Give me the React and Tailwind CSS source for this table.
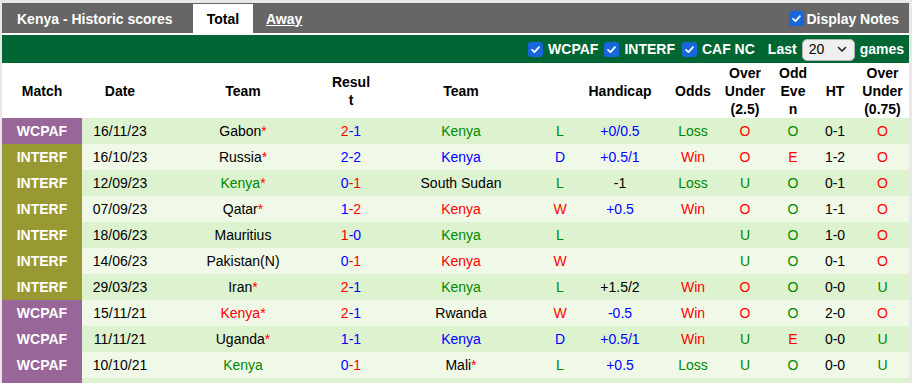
import React from 'react';

const C = {
    r: 'text-[#ff0000]',
    b: 'text-[#0000ff]',
    g: 'text-[#008800]',
    k: 'text-black',
};

// [league, date, [home, color, star], [hs, hc, as, ac], [away, color, star], [res, color], [hcap, color], [odds, color], [ou, color], [oe, color], ht, [ou2, color]]
const rows = [
    ['WCPAF', '16/11/23', ['Gabon', 'k', 1], ['2', 'r', '1', 'b'], ['Kenya', 'g', 0], ['L', 'g'], ['+0/0.5', 'b'], ['Loss', 'g'], ['O', 'r'], ['O', 'g'], '0-1', ['O', 'r']],
    ['INTERF', '16/10/23', ['Russia', 'k', 1], ['2', 'b', '2', 'b'], ['Kenya', 'b', 0], ['D', 'b'], ['+0.5/1', 'b'], ['Win', 'r'], ['O', 'r'], ['E', 'r'], '1-2', ['O', 'r']],
    ['INTERF', '12/09/23', ['Kenya', 'g', 1], ['0', 'b', '1', 'r'], ['South Sudan', 'k', 0], ['L', 'g'], ['-1', 'k'], ['Loss', 'g'], ['U', 'g'], ['O', 'g'], '0-1', ['O', 'r']],
    ['INTERF', '07/09/23', ['Qatar', 'k', 1], ['1', 'b', '2', 'r'], ['Kenya', 'r', 0], ['W', 'r'], ['+0.5', 'b'], ['Win', 'r'], ['O', 'r'], ['O', 'g'], '1-1', ['O', 'r']],
    ['INTERF', '18/06/23', ['Mauritius', 'k', 0], ['1', 'r', '0', 'b'], ['Kenya', 'g', 0], ['L', 'g'], ['', 'k'], ['', 'k'], ['U', 'g'], ['O', 'g'], '1-0', ['O', 'r']],
    ['INTERF', '14/06/23', ['Pakistan(N)', 'k', 0], ['0', 'b', '1', 'r'], ['Kenya', 'r', 0], ['W', 'r'], ['', 'k'], ['', 'k'], ['U', 'g'], ['O', 'g'], '0-1', ['O', 'r']],
    ['INTERF', '29/03/23', ['Iran', 'k', 1], ['2', 'r', '1', 'b'], ['Kenya', 'g', 0], ['L', 'g'], ['+1.5/2', 'k'], ['Win', 'r'], ['O', 'r'], ['O', 'g'], '0-0', ['U', 'g']],
    ['WCPAF', '15/11/21', ['Kenya', 'r', 1], ['2', 'r', '1', 'b'], ['Rwanda', 'k', 0], ['W', 'r'], ['-0.5', 'b'], ['Win', 'r'], ['O', 'r'], ['O', 'g'], '2-0', ['O', 'r']],
    ['WCPAF', '11/11/21', ['Uganda', 'k', 1], ['1', 'b', '1', 'b'], ['Kenya', 'b', 0], ['D', 'b'], ['+0.5/1', 'b'], ['Win', 'r'], ['U', 'g'], ['E', 'r'], '0-0', ['U', 'g']],
    ['WCPAF', '10/10/21', ['Kenya', 'g', 0], ['0', 'b', '1', 'r'], ['Mali', 'k', 1], ['L', 'g'], ['+0.5', 'b'], ['Loss', 'g'], ['U', 'g'], ['O', 'g'], '0-0', ['U', 'g']],
];

const Check = () => (
    <span className="inline-flex items-center justify-center w-[15px] h-[15px] rounded-[3px] bg-[#1667dc]">
        <svg width="11" height="11" viewBox="0 0 12 12" fill="none">
            <path d="M2.2 6.3 L4.9 8.9 L9.8 3.4" stroke="white" strokeWidth="1.9" strokeLinecap="round" strokeLinejoin="round" />
        </svg>
    </span>
);

const Team = ({ t }) => (
    <span className={C[t[1]]}>
        {t[0]}
        {t[2] ? <span className="text-[#ff0000]">*</span> : null}
    </span>
);

export default function App() {
    return (
        <div className="w-[912px] bg-[#e8e8e8] pl-[2px] pt-[3px] pr-[3px] font-['Liberation_Sans',Arial,sans-serif] text-[14px]">
            <div className="w-[907px] bg-white">
                {/* Title bar */}
                <div className="h-[30px] bg-[#666666] flex items-end text-white font-bold">
                    <div className="h-[30px] flex items-center pt-[2px] pl-[15px] w-[191px]">Kenya - Historic scores</div>
                    <div className="h-[29px] w-[60px] pt-[1px] bg-white text-black flex items-center justify-center">Total</div>
                    <div className="h-[30px] flex items-center pt-[2px] pl-[13px] underline">Away</div>
                    <div className="h-[30px] flex items-center pt-[2px] ml-auto pr-[10px]">
                        <span className="mr-[2px]"><Check /></span>
                        Display Notes
                    </div>
                </div>

                {/* Filter bar */}
                <div className="mt-[2px] h-[28px] pt-[1px] bg-[#006633] flex items-center justify-end pr-[5px] text-white font-bold">
                    <Check />
                    <span className="ml-[5px] mr-[6px]">WCPAF</span>
                    <Check />
                    <span className="ml-[5px] mr-[7px]">INTERF</span>
                    <Check />
                    <span className="ml-[5px] mr-[13px]">CAF NC</span>
                    <span className="mr-[5px]">Last</span>
                    <div className="w-[53px] h-[22px] rounded-[5px] border border-[#b5b5b5] bg-[#efefef] text-black font-normal flex items-center pl-[6px] pr-[7px]">
                        <span>20</span>
                        <svg className="ml-auto" width="10" height="7" viewBox="0 0 10 7" fill="none">
                            <path d="M1.5 1.5 L5 5 L8.5 1.5" stroke="#222" strokeWidth="1.6" strokeLinecap="round" strokeLinejoin="round" />
                        </svg>
                    </div>
                    <span className="ml-[5px]">games</span>
                </div>

                <table className="table-fixed border-collapse w-[907px] text-center">
                    <colgroup>
                        <col className="w-[80px]" />
                        <col className="w-[76px]" />
                        <col className="w-[170px]" />
                        <col className="w-[46px]" />
                        <col className="w-[174px]" />
                        <col className="w-[24px]" />
                        <col className="w-[96px]" />
                        <col className="w-[50px]" />
                        <col className="w-[54px]" />
                        <col className="w-[42px]" />
                        <col className="w-[42px]" />
                        <col className="w-[53px]" />
                    </colgroup>
                    <thead>
                        <tr className="h-[54px] bg-white font-bold text-black leading-[18px]">
                            <th className="p-0 pt-[1px]">Match</th>
                            <th className="p-0 pt-[1px]">Date</th>
                            <th className="p-0 pt-[1px]">Team</th>
                            <th className="p-0 pt-[1px] px-[3px] break-all">Result</th>
                            <th className="p-0 pt-[1px]">Team</th>
                            <th className="p-0"></th>
                            <th className="p-0 pt-[1px]">Handicap</th>
                            <th className="p-0 pt-[1px]">Odds</th>
                            <th className="p-0 pt-[1px]">Over Under (2.5)</th>
                            <th className="p-0 pt-[1px] px-[6px] break-all">Odd Even</th>
                            <th className="p-0 pt-[1px]">HT</th>
                            <th className="p-0 pt-[1px]">Over Under (0.75)</th>
                        </tr>
                    </thead>
                    <tbody>
                        {rows.map((r, i) => (
                            <tr key={i} className={i % 2 === 0 ? 'h-[26px] bg-[#ddf2cf]' : 'h-[26px] bg-[#f0f9e8]'}>
                                <td className={r[0] === 'WCPAF' ? 'p-0 pt-[1px] bg-[#996699] text-white font-bold' : 'p-0 pt-[1px] bg-[#999933] text-white font-bold'}>{r[0]}</td>
                                <td className="p-0 pt-[1px] text-black">{r[1]}</td>
                                <td className="p-0 pt-[1px]"><Team t={r[2]} /></td>
                                <td className="p-0 pt-[1px]">
                                    <span className={C[r[3][1]]}>{r[3][0]}</span>
                                    <span className={C[r[3][3]]}>-{r[3][2]}</span>
                                </td>
                                <td className="p-0 pt-[1px]"><Team t={r[4]} /></td>
                                <td className={'p-0 pt-[1px] ' + C[r[5][1]]}>{r[5][0]}</td>
                                <td className={'p-0 pt-[1px] ' + C[r[6][1]]}>{r[6][0]}</td>
                                <td className={'p-0 pt-[1px] ' + C[r[7][1]]}>{r[7][0]}</td>
                                <td className={'p-0 pt-[1px] ' + C[r[8][1]]}>{r[8][0]}</td>
                                <td className={'p-0 pt-[1px] ' + C[r[9][1]]}>{r[9][0]}</td>
                                <td className="p-0 pt-[1px] text-black">{r[10]}</td>
                                <td className={'p-0 pt-[1px] ' + C[r[11][1]]}>{r[11][0]}</td>
                            </tr>
                        ))}
                        {/* next row, only its top edge shows in the frame */}
                        <tr className="h-[26px] bg-[#ddf2cf]">
                            <td className="p-0 bg-[#996699]"></td>
                            <td className="p-0" colSpan={11}></td>
                        </tr>
                    </tbody>
                </table>
            </div>
        </div>
    );
}
